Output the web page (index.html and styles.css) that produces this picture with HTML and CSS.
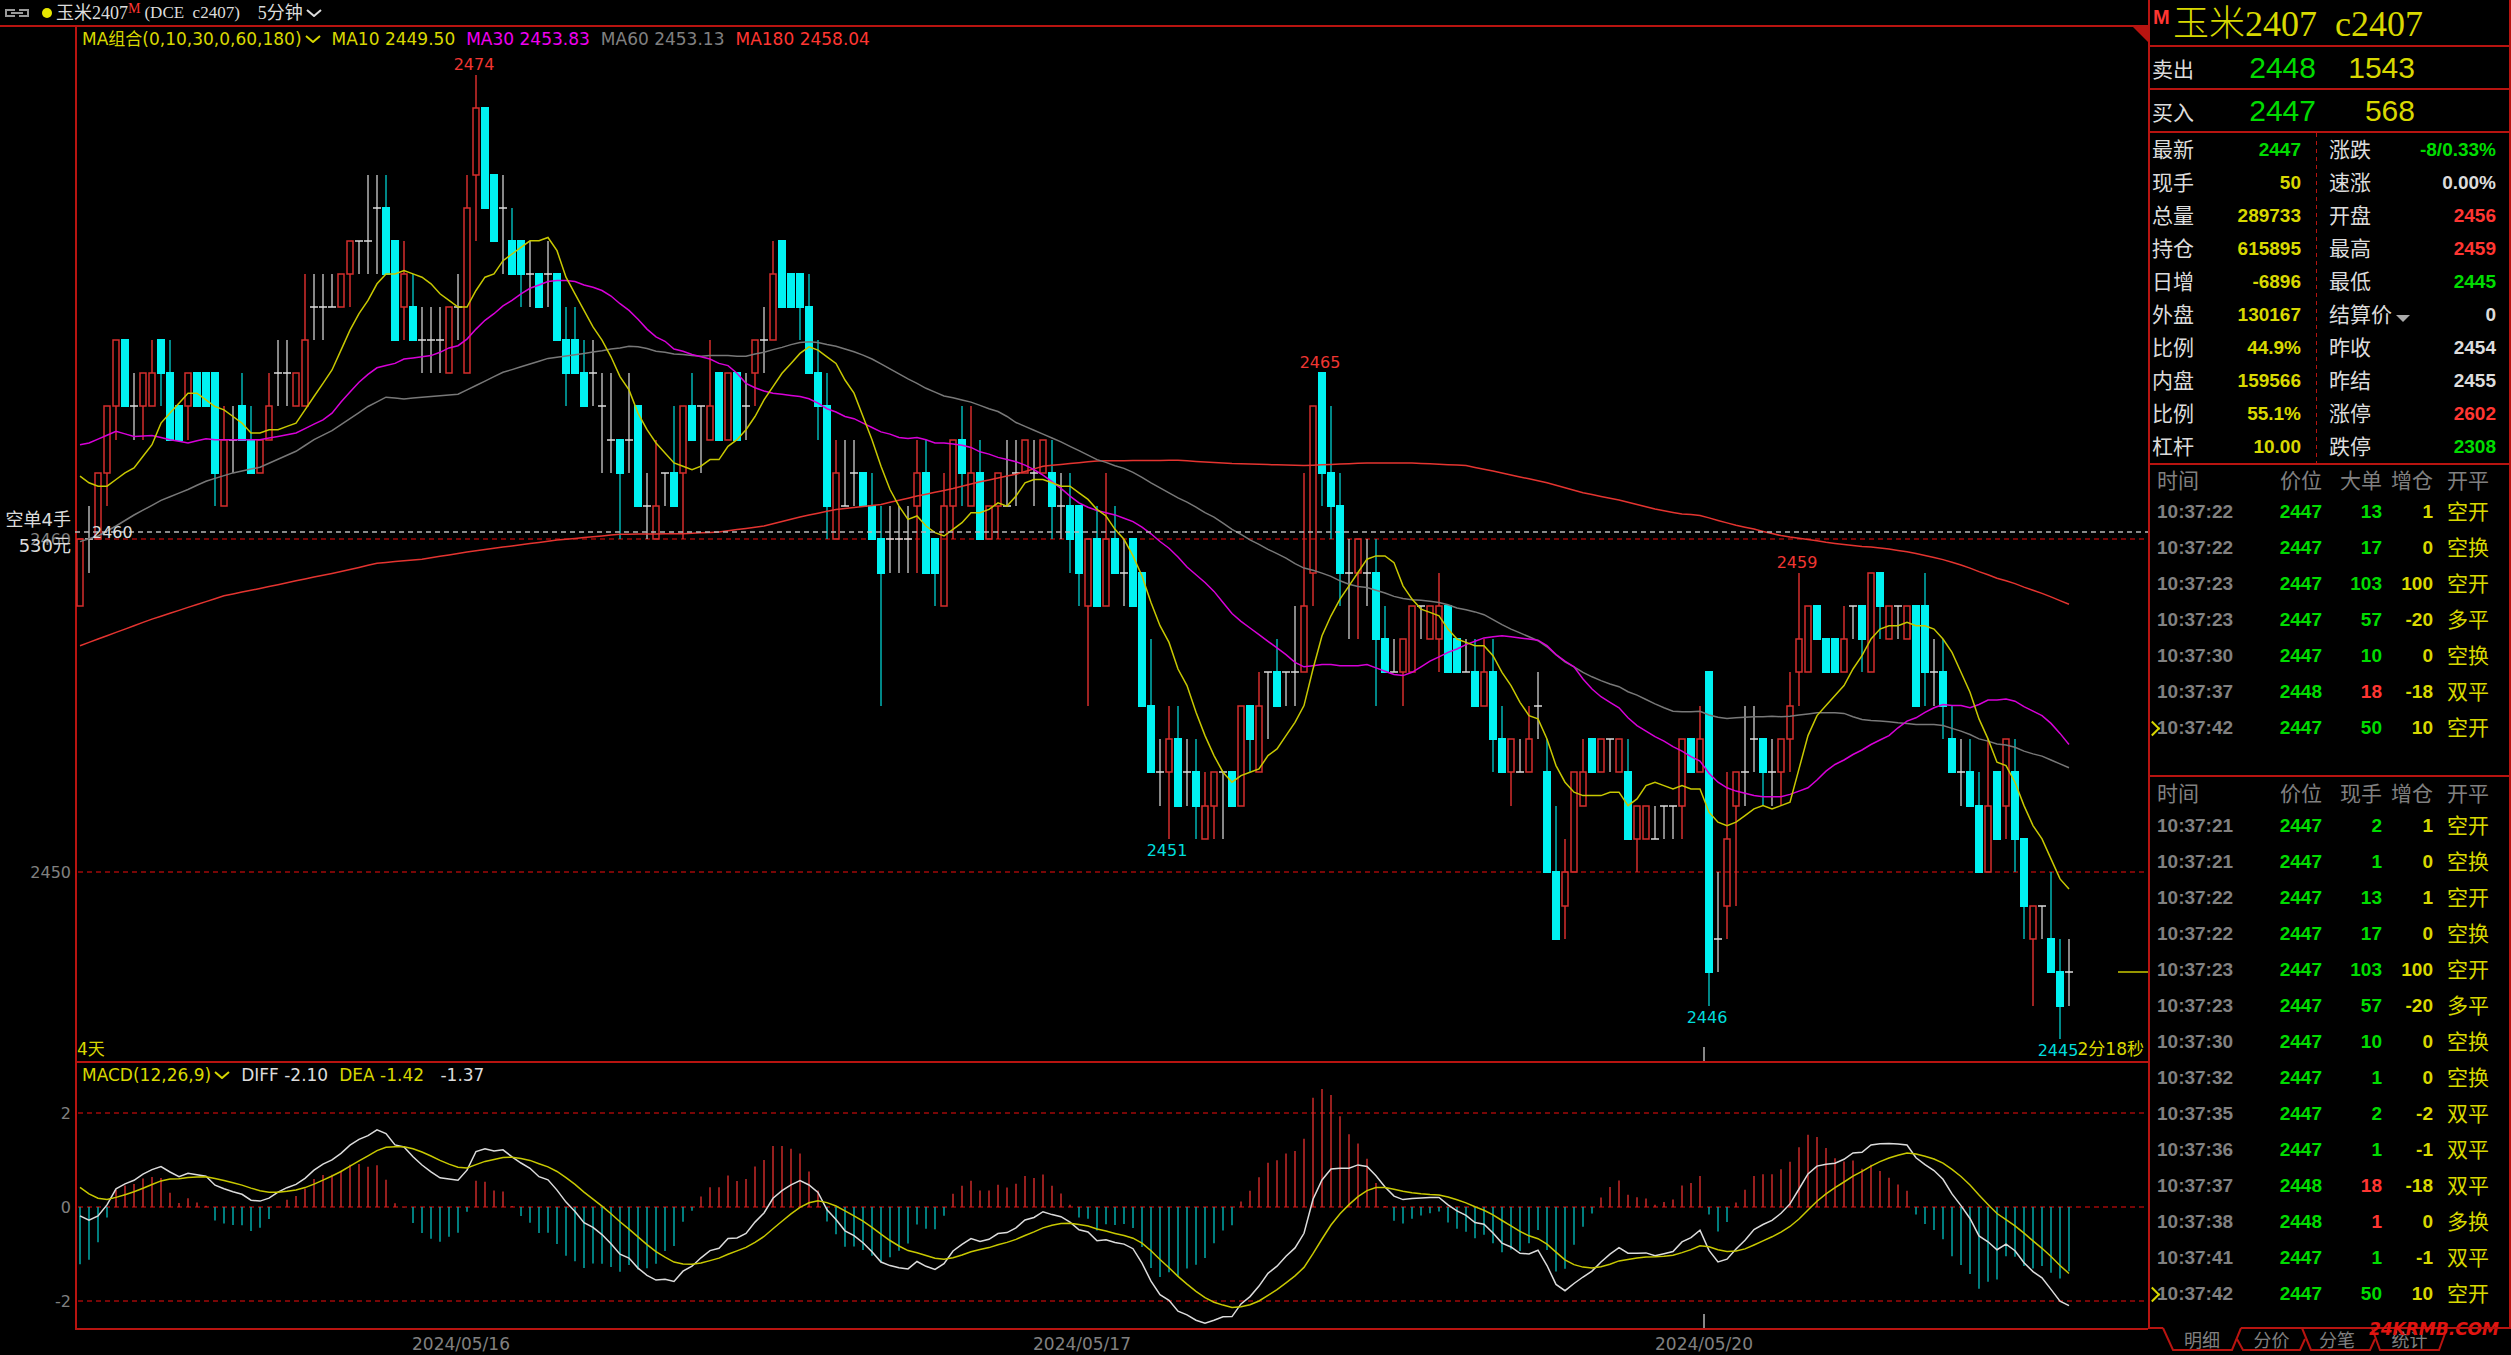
FILE: index.html
```html
<!DOCTYPE html>
<html lang="zh-CN">
<head>
<meta charset="utf-8">
<title>玉米2407 5分钟</title>
<link rel="stylesheet" href="styles.css">
</head>
<body>
<div class="app">
  <main class="chart">
    <header class="topbar">
      <svg class="link-icon" viewBox="0 0 24 8" aria-hidden="true"><path d="M10 1H1v6h9M14 1h9v6h-9M6 4h12"/></svg>
      <span class="dot"></span>
      <h1 class="symbol">玉米2407<sup>M</sup><span class="code">(DCE&nbsp; c2407)</span></h1>
      <button class="period" type="button">5分钟<svg class="chevron" viewBox="0 0 16 8" aria-hidden="true"><path d="M1 1l7 6 7-6"/></svg></button>
    </header>
    <section class="pane price-pane">
      <div class="axis price-axis"></div>
      <div class="plot" id="price-plot">
        <div class="legend">
          <button class="yellow" type="button">MA组合(0,10,30,0,60,180)<svg class="chevron" viewBox="0 0 16 8" aria-hidden="true"><path d="M1 1l7 6 7-6"/></svg></button>
          <span class="yellow">MA10 2449.50</span>
          <span class="magenta">MA30 2453.83</span>
          <span class="gray">MA60 2453.13</span>
          <span class="red">MA180 2458.04</span>
        </div>
        <svg class="canvas" id="price"></svg>
        <svg class="corner" viewBox="0 0 15 15" aria-hidden="true"><path d="M0 0h15v15z"/></svg>
        <span class="days">4天</span>
        <span class="countdown">2分18秒</span>
      </div>
    </section>
    <section class="pane macd-pane">
      <div class="axis"></div>
      <div class="plot" id="macd-plot">
        <div class="legend">
          <button class="yellow" type="button">MACD(12,26,9)<svg class="chevron" viewBox="0 0 16 8" aria-hidden="true"><path d="M1 1l7 6 7-6"/></svg></button>
          <span class="white">DIFF -2.10</span>
          <span class="yellow">DEA -1.42</span>
          <span class="white">&nbsp;-1.37</span>
        </div>
        <svg class="canvas" id="macd"></svg>
      </div>
    </section>
    <footer class="dates"><svg class="canvas" id="dates"></svg></footer>
  </main>
  <aside class="quote">
    <h2 class="title"><sup>M</sup>玉米2407&nbsp; c2407</h2>
    <div class="book"><span>卖出</span><b class="green">2448</b><b class="yellow">1543</b></div>
    <div class="book"><span>买入</span><b class="green">2447</b><b class="yellow">568</b></div>
    <div class="stats">
      <dl>
        <div><dt>最新</dt><dd class="green">2447</dd></div>
        <div><dt>现手</dt><dd class="yellow">50</dd></div>
        <div><dt>总量</dt><dd class="yellow">289733</dd></div>
        <div><dt>持仓</dt><dd class="yellow">615895</dd></div>
        <div><dt>日增</dt><dd class="yellow">-6896</dd></div>
        <div><dt>外盘</dt><dd class="yellow">130167</dd></div>
        <div><dt>比例</dt><dd class="yellow">44.9%</dd></div>
        <div><dt>内盘</dt><dd class="yellow">159566</dd></div>
        <div><dt>比例</dt><dd class="yellow">55.1%</dd></div>
        <div><dt>杠杆</dt><dd class="yellow">10.00</dd></div>
      </dl>
      <dl>
        <div><dt>涨跌</dt><dd class="green">-8/0.33%</dd></div>
        <div><dt>速涨</dt><dd class="white">0.00%</dd></div>
        <div><dt>开盘</dt><dd class="red">2456</dd></div>
        <div><dt>最高</dt><dd class="red">2459</dd></div>
        <div><dt>最低</dt><dd class="green">2445</dd></div>
        <div><dt>结算价<i class="caret"></i></dt><dd class="white">0</dd></div>
        <div><dt>昨收</dt><dd class="white">2454</dd></div>
        <div><dt>昨结</dt><dd class="white">2455</dd></div>
        <div><dt>涨停</dt><dd class="red">2602</dd></div>
        <div><dt>跌停</dt><dd class="green">2308</dd></div>
      </dl>
    </div>
    <div class="ticks big">
      <table>
        <thead><tr><th>时间</th><th>价位</th><th>大单</th><th>增仓</th><th>开平</th></tr></thead>
        <tbody>
          <tr><td>10:37:22</td><td>2447</td><td>13</td><td>1</td><td>空开</td></tr>
          <tr><td>10:37:22</td><td>2447</td><td>17</td><td>0</td><td>空换</td></tr>
          <tr><td>10:37:23</td><td>2447</td><td>103</td><td>100</td><td>空开</td></tr>
          <tr><td>10:37:23</td><td>2447</td><td>57</td><td>-20</td><td>多平</td></tr>
          <tr><td>10:37:30</td><td>2447</td><td>10</td><td>0</td><td>空换</td></tr>
          <tr><td>10:37:37</td><td>2448</td><td class="up">18</td><td>-18</td><td>双平</td></tr>
          <tr class="now"><td>10:37:42</td><td>2447</td><td>50</td><td>10</td><td>空开</td></tr>
        </tbody>
      </table>
    </div>
    <div class="ticks all">
      <table>
        <thead><tr><th>时间</th><th>价位</th><th>现手</th><th>增仓</th><th>开平</th></tr></thead>
        <tbody>
          <tr><td>10:37:21</td><td>2447</td><td>2</td><td>1</td><td>空开</td></tr>
          <tr><td>10:37:21</td><td>2447</td><td>1</td><td>0</td><td>空换</td></tr>
          <tr><td>10:37:22</td><td>2447</td><td>13</td><td>1</td><td>空开</td></tr>
          <tr><td>10:37:22</td><td>2447</td><td>17</td><td>0</td><td>空换</td></tr>
          <tr><td>10:37:23</td><td>2447</td><td>103</td><td>100</td><td>空开</td></tr>
          <tr><td>10:37:23</td><td>2447</td><td>57</td><td>-20</td><td>多平</td></tr>
          <tr><td>10:37:30</td><td>2447</td><td>10</td><td>0</td><td>空换</td></tr>
          <tr><td>10:37:32</td><td>2447</td><td>1</td><td>0</td><td>空换</td></tr>
          <tr><td>10:37:35</td><td>2447</td><td>2</td><td>-2</td><td>双平</td></tr>
          <tr><td>10:37:36</td><td>2447</td><td>1</td><td>-1</td><td>双平</td></tr>
          <tr><td>10:37:37</td><td>2448</td><td class="up">18</td><td>-18</td><td>双平</td></tr>
          <tr><td>10:37:38</td><td>2448</td><td class="up">1</td><td>0</td><td>多换</td></tr>
          <tr><td>10:37:41</td><td>2447</td><td>1</td><td>-1</td><td>双平</td></tr>
          <tr class="now"><td>10:37:42</td><td>2447</td><td>50</td><td>10</td><td>空开</td></tr>
        </tbody>
      </table>
    </div>
    <nav class="tabs">
      <button type="button"><svg viewBox="0 0 78 24" aria-hidden="true"><path d="M0 1l10 22h59l9-22"/></svg>明细</button>
      <button type="button"><svg viewBox="0 0 61 24" aria-hidden="true"><path d="M0 1h61M-4 12l6 11h57l5-11"/></svg>分价</button>
      <button type="button"><svg viewBox="0 0 70 24" aria-hidden="true"><path d="M0 1h70M0 1l9 22h59l5-11"/></svg>分笔</button>
      <button type="button"><svg viewBox="0 0 75 24" aria-hidden="true"><path d="M0 1h75M0 1l8 22h59l8-22"/></svg>统计</button>
      <span class="brand">24KRMB.COM</span>
    </nav>
  </aside>
</div>
<script src="chart.js"></script>
</body>
</html>
```
FILE: styles.css
```css
* { box-sizing: border-box; }
:root {
  --line: #b81410;
  --yellow: #d8d800;
  --green: #00dc00;
  --red: #ff3632;
  --white: #dcdcdc;
  --gray: #808080;
  --hei: "Liberation Sans", "Noto Sans CJK SC", sans-serif;
  --song: "Liberation Serif", "Noto Sans CJK SC", serif;
}
html, body { height: 100%; }
body { margin: 0; background: #000; color: var(--white); font-family: "DejaVu Sans", "Noto Sans CJK SC", sans-serif; font-size: 16px; }
h1, h2, dl, dd { margin: 0; font-weight: 400; }
button { background: none; border: 0; padding: 0; margin: 0; font: inherit; color: inherit; }
.app { display: grid; grid-template-columns: minmax(0, 1fr) 363px; min-height: 100vh; }
.yellow { color: var(--yellow); }
.green { color: var(--green); }
.red { color: var(--red); }
.white { color: var(--white); }
.gray { color: var(--gray); }
.magenta { color: #f000f0; }

.chart { display: grid; grid-template-rows: 25px minmax(0, 1036fr) minmax(0, 269fr) 25px; min-width: 0; }
.topbar { display: flex; align-items: center; padding-left: 5px; font: 18px/24px var(--song); }
.link-icon { width: 24px; height: 8px; fill: none; stroke: #9a9a9a; stroke-width: 2; }
.dot { width: 10px; height: 10px; margin: 0 4px 0 13px; border-radius: 50%; background: #e6e600; }
.symbol { display: flex; font-size: 18px; line-height: 24px; }
.symbol sup { font-size: 14px; line-height: 16px; color: var(--red); }
.code { margin-left: 4px; font-size: 17px; }
.period { display: flex; align-items: center; margin-left: 18px; }
.chevron { width: 16px; height: 8px; margin-left: 3px; fill: none; stroke: currentColor; stroke-width: 2; }

.pane { display: grid; grid-template-columns: 75px minmax(0, 1fr); min-height: 0; }
.plot { position: relative; border: 2px solid var(--line); border-width: 2px 0 0 2px; min-height: 0; }
.price-pane .axis { border-top: 2px solid var(--line); }
.macd-pane .plot { border-bottom-width: 2px; }
.canvas { position: absolute; left: -77px; top: 0; width: calc(100% + 77px); height: 100%; overflow: visible; }
.legend { position: relative; z-index: 1; display: flex; gap: 11px; padding-left: 5px; font-size: 17px; line-height: 24px; }
.legend button { display: flex; align-items: center; }
.corner { position: absolute; right: 0; top: 0; width: 15px; height: 15px; fill: var(--line); }
.days { position: absolute; left: 0; bottom: 2px; font-size: 17px; line-height: 20px; color: var(--yellow); }
.countdown { position: absolute; right: 4px; bottom: 2px; font-size: 17px; line-height: 20px; color: var(--yellow); }
.dates { position: relative; }
.dates .canvas { left: 0; width: 100%; }
svg text { font-size: 16px; }
svg .note { font-size: 18px; }
#dates text { font-size: 17px; }

.quote { display: flex; flex-direction: column; border: 2px solid var(--line); border-width: 0 2px 0 2px; font-family: var(--hei); }
.title { display: flex; height: 45px; padding-left: 3px; font: 300 36px/48px var(--song); color: var(--yellow); white-space: nowrap; }
.title sup { width: 20px; font: bold 20px/34px "Liberation Sans", sans-serif; color: var(--red); }
.book { display: grid; grid-template-columns: 64px 100px 99px; align-items: center; height: 43px; padding-left: 2px; border-top: 2px solid var(--line); }
.book span { font-size: 21px; }
.book b { font: 30px/40px "Liberation Sans", sans-serif; text-align: right; }
.stats { display: grid; grid-template-columns: 166px 1fr; height: 334px; border-top: 2px solid var(--line); border-bottom: 2px solid var(--line); }
.stats dl { display: grid; grid-template-rows: repeat(10, 33px); padding: 0 15px 0 2px; }
.stats dl + dl { padding: 0 13px; background: repeating-linear-gradient(var(--line) 0 4px, transparent 4px 8px) left top / 1px 100% no-repeat; }
.stats dl div { display: flex; justify-content: space-between; align-items: center; }
.stats dt { font-size: 21px; line-height: 32px; }
.stats dd { font: bold 19px/32px "Liberation Sans", sans-serif; }
.caret { display: inline-block; margin-left: 4px; border: 7px solid transparent; border-top-color: #aaa; border-bottom: 0; }
.ticks table { width: 100%; border-collapse: collapse; table-layout: fixed; font: bold 19px/36px "Liberation Sans", "Noto Sans CJK SC", sans-serif; }
.ticks th, .ticks td { padding: 0; height: 36px; text-align: right; white-space: nowrap; }
.ticks th { height: 31px; padding-top: 3px; font-size: 21px; line-height: 28px; font-weight: 400; color: var(--gray); }
.big th { height: 29px; line-height: 26px; }
.ticks th:first-child, .ticks td:first-child { width: 92px; padding-left: 7px; text-align: left; }
.ticks th:nth-child(2), .ticks td:nth-child(2) { width: 80px; }
.ticks th:nth-child(3), .ticks td:nth-child(3) { width: 60px; }
.ticks th:nth-child(4), .ticks td:nth-child(4) { width: 51px; }
.ticks th:last-child, .ticks td:last-child { padding-left: 14px; text-align: left; }
.ticks td:first-child { color: var(--gray); }
.ticks td:nth-child(2), .ticks td:nth-child(3) { color: var(--green); }
.ticks td.up:nth-child(3) { color: var(--red); }
.ticks td:nth-child(4), .ticks td:last-child { color: var(--yellow); }
.ticks td:last-child { font-size: 21px; font-weight: 400; }
.now td:first-child { position: relative; }
.now td:first-child::before { content: ""; position: absolute; left: -3px; top: 13px; width: 9px; height: 9px; border: 2px solid var(--yellow); border-width: 2px 2px 0 0; transform: rotate(45deg); }
.big { height: 312px; border-bottom: 2px solid var(--line); }
.all { flex: 1; }
.tabs { position: relative; display: flex; height: 28px; margin: 0 -2px; padding-left: 15px; background: #000; color: var(--gray); font-size: 18px; }
.tabs::before { content: ""; position: absolute; left: 0; top: 0; width: 15px; border-top: 2px solid var(--line); }
.tabs::after { content: ""; position: absolute; right: 0; top: 0; left: 299px; border-top: 2px solid var(--line); }
.tabs button { position: relative; width: 70px; line-height: 24px; }
.tabs button:first-child { width: 78px; }
.tabs button:nth-child(2) { width: 61px; }
.tabs button:nth-child(4) { width: 75px; }
.tabs svg { position: absolute; left: 0; top: 0; width: 100%; height: 24px; overflow: visible; fill: none; stroke: var(--line); stroke-width: 2; }
.brand { position: absolute; right: 12px; top: -8px; font: italic bold 17px/20px "DejaVu Sans", sans-serif; color: #e01410; }
```
FILE: chart.js
```js
// Five-minute bars, offsets from 2400: open, high, low, close.
const BARS = `
58 60 58 60,60 61 59 60,60 62 60 62,62 64 61 64,64 66 63 66,66 66 64 64,64 65 63 64,64 65 63 65,64 66 64 65,66 66 64 65,
65 66 63 63,64 64 63 63,64 65 63 65,65 65 64 64,65 65 64 64,65 65 61 62,61 64 61 63,63 64 62 63,64 65 63 63,63 64 62 62,
62 63 62 63,63 65 63 64,65 66 64 65,65 66 64 65,64 65 64 65,64 68 64 66,67 68 66 67,67 68 66 67,67 68 67 67,67 68 67 68,
68 69 67 69,69 69 68 69,69 71 68 69,70 71 68 70,70 71 68 68,69 69 66 66,67 69 66 68,67 68 66 66,66 67 65 66,66 67 65 66,
66 67 65 66,65 67 65 67,67 68 66 67,65 71 65 70,71 74 69 73,73 73 70 70,71 71 69 69,70 71 68 70,69 70 68 68,69 69 67 68,
68 69 67 68,68 68 67 67,68 69 67 68,68 68 66 66,66 67 64 65,66 67 65 65,65 66 64 64,65 66 64 65,64 65 62 64,63 65 62 63,
63 63 60 62,63 65 62 63,64 64 61 61,61 62 60 61,60 63 60 61,62 62 61 62,62 64 61 61,62 64 60 64,64 65 63 63,64 64 62 64,
63 66 63 64,65 65 63 63,63 65 63 65,65 65 63 63,64 65 63 64,65 66 64 66,66 67 65 66,66 69 66 68,69 69 67 67,68 68 67 67,
68 68 66 67,67 68 65 65,65 66 63 64,64 65 60 61,60 63 60 62,61 63 61 61,62 63 61 62,62 62 61 61,61 62 60 60,60 61 55 59,
60 61 59 60,60 61 59 60,60 61 59 60,61 63 59 62,62 63 59 59,60 60 58 59,58 62 58 61,61 63 60 63,63 64 61 62,61 64 61 62,
62 63 60 60,60 61 60 61,61 62 60 62,61 63 61 61,62 63 61 62,62 63 62 63,62 63 61 62,62 63 62 63,62 63 60 61,61 62 60 61,
61 62 59 60,61 61 58 59,58 60 55 60,60 61 58 58,58 62 58 60,60 61 59 59,59 60 58 59,60 60 58 58,59 59 55 55,55 57 53 53,
53 54 52 53,53 55 51 54,54 55 52 52,53 54 52 53,53 54 51 52,51 53 51 52,52 53 51 53,53 53 51 53,53 53 52 52,52 55 52 55,
55 55 53 54,53 56 53 55,56 56 54 56,56 57 55 55,56 56 55 56,56 58 55 56,56 62 56 58,59 64 58 64,65 65 61 62,62 64 60 61,
61 62 58 59,59 60 57 59,59 60 57 60,59 60 58 59,59 60 55 57,57 58 56 56,56 57 56 56,56 57 55 57,56 58 56 58,58 58 57 58,
57 58 57 58,57 59 56 58,58 58 56 56,57 57 56 56,56 57 56 56,56 57 55 55,55 57 55 56,56 57 53 54,54 55 53 53,53 54 52 54,
53 54 53 53,53 55 53 54,55 56 54 55,53 54 50 50,50 52 48 48,49 51 48 50,50 53 50 53,52 54 52 53,54 54 53 53,53 54 53 54,
54 54 53 54,53 54 53 54,53 54 51 51,51 52 50 52,51 52 51 52,51 52 51 51,52 52 51 52,52 52 51 52,52 54 51 54,54 54 53 53,
53 55 53 54,56 56 46 47,48 50 47 48,49 53 48 51,52 53 49 53,53 55 52 53,54 55 53 54,54 54 52 53,53 54 52 53,53 54 52 54,
54 56 53 55,56 59 55 57,56 58 56 58,58 58 57 57,57 57 56 56,57 57 56 56,56 58 56 57,58 58 57 58,58 58 56 57,56 59 56 59,
59 59 57 58,57 58 57 58,58 58 57 58,57 58 57 58,58 58 55 55,58 59 55 56,56 57 55 56,56 57 54 55,54 55 53 53,53 54 52 53,
53 54 52 52,52 53 50 50,50 54 50 52,53 53 51 51,52 54 51 54,53 54 50 51,51 51 48 49,48 49 46 49,49 49 48 49,48 50 47 47,
47 48 45 46,47 48 46 47`.trim().split(/,\s*/).map(b => b.split(' ').map(Number));

// Averages carried in from before the first bar: [bar index, value] knots.
const SEEDS = {
  10: [[0,61.9],[1,61.7],[2,61.6],[3,61.6],[4,61.8],[5,62],[6,62.15],[7,62.5],[8,62.85]],
  30: [[0,62.85],[1,62.9],[4,63.25],[6,63.1],[8,63.13],[10,63],[12,62.9],[14,63.03],[15,63],[20,63],[22,63.1],[24,63.2],[27,63.6],[28,63.8]],
  60: [[0,59.93],[2,60.1],[4,60.4],[6,60.73],[9,61.17],[12,61.5],[14,61.75],[17,62],[20,62.17],[24,62.65],[26,63],[28,63.27],[32,64],[34,64.28],[36,64.23],[42,64.37],[43,64.5],[47,65.03],[52,65.45],[56,65.6],[58,65.68]],
  180: [[0,56.8],[8,57.6],[12,57.95],[16,58.3],[20,58.52],[24,58.75],[29,59.03],[33,59.28],[38,59.4],[43,59.62],[48,59.8],[53,59.98],[60,60.15],[67,60.17],[71,60.22],[76,60.4],[80,60.67],[84,60.9],[89,61.05],[93,61.3],[97,61.53],[100,61.73],[104,61.96],[107,62.2],[113,62.36],[122,62.38],[128,62.28],[136,62.22],[143,62.3],[148,62.3],[154,62.22],[158,62],[163,61.7],[167,61.4],[171,61.18],[175,60.91],[178,60.76]]
};

const close = BARS.map(b => b[3]);
const PITCH = 9, FIRST = 80;
const bx = i => FIRST + PITCH * i;

function average(n) {
  const seed = SEEDS[n];
  return close.map((_, i) => {
    if (i >= n - 1) return close.slice(i - n + 1, i + 1).reduce((a, b) => a + b) / n;
    const k = Math.max(1, seed.findIndex(s => s[0] >= i));
    const [x0, v0] = seed[k - 1], [x1, v1] = seed[k];
    return v0 + (v1 - v0) * (i - x0) / (x1 - x0);
  });
}

const line = (x1, y1, x2, y2, c, extra = '') =>
  `<path d="M${x1} ${y1}L${x2} ${y2}" stroke="${c}" ${extra}/>`;
const curve = (vals, y, c) =>
  `<polyline points="${vals.map((v, i) => bx(i) + ',' + y(v).toFixed(1)).join(' ')}" fill="none" stroke="${c}" stroke-width="1.5"/>`;
const text = (x, y, s, c, anchor = 'middle', cls = '') =>
  `<text x="${x}" y="${y}" fill="${c}" text-anchor="${anchor}" class="${cls}">${s}</text>`;

function drawPrice() {
  const svg = document.getElementById('price');
  const W = svg.clientWidth, H = svg.clientHeight;
  const k = H / 1034;
  const y = v => (512.3 - 81740 * Math.log((2400 + v) / 2460)) * k;
  const r = v => Math.round(y(v));
  let s = '';
  for (const v of [60, 50]) s += line(78, r(v), W, r(v), '#a00808', 'stroke-width="1.5" stroke-dasharray="5 4"');
  BARS.forEach(([o, h, l, c], i) => {
    const x = bx(i);
    if (o === c) {
      s += line(x, r(h), x, r(l), '#b4b4b4', 'stroke-width="1.5"') + line(x - 4, r(o), x + 4, r(o), '#dcdcdc', 'stroke-width="1.5"');
    } else if (c < o) {
      s += line(x, r(h), x, r(l), '#00b4b4', 'stroke-width="1.5"');
      s += `<rect x="${x - 4}" y="${r(o) - 1}" width="8" height="${r(c) - r(o) + 2}" fill="#00f2f2"/>`;
    } else {
      s += line(x, r(h), x, r(c), '#d42e2c', 'stroke-width="1.5"') + line(x, r(o), x, r(l), '#d42e2c', 'stroke-width="1.5"');
      s += `<rect x="${x - 3}" y="${r(c)}" width="6" height="${r(o) - r(c)}" fill="none" stroke="#d42e2c" stroke-width="1.5"/>`;
    }
  });
  s += curve(average(180), y, '#e43430') + curve(average(60), y, '#787878') + curve(average(30), y, '#d800d8') + curve(average(10), y, '#c8c800');
  const order = Math.round(505 * k);
  s += line(75, order, W, order, '#b8b8b8', 'stroke-width="1.5" stroke-dasharray="5 4"');
  s += text(92, order + 6, 2460, '#dcdcdc', 'start');
  s += text(71, r(60) + 6, 2460, '#808080', 'end') + text(71, r(50) + 6, 2450, '#808080', 'end');
  s += text(71, order - 6, '空单4手', '#dcdcdc', 'end', 'note') + text(71, order + 20, '530元', '#dcdcdc', 'end', 'note');
  for (const [i, v, up] of [[44, 74, 1], [138, 65, 1], [191, 59, 1], [121, 51, 0], [181, 46, 0], [220, 45, 0]])
    s += text(bx(i) - 2, up ? y(v) - 5 : y(v) + 17, 2400 + v, up ? '#f03632' : '#00dcdc');
  s += line(W - 30, r(47), W, r(47), '#c8c800', 'stroke-width="1.5"');
  s += line(1704, H - 14, 1704, H, '#b4b4b4', 'stroke-width="1.5"');
  svg.innerHTML = s;
}

function drawMacd() {
  const svg = document.getElementById('macd');
  const W = svg.clientWidth, H = svg.clientHeight;
  const unit = 47 * H / 265, zero = 144 * H / 265;
  const y = v => zero - v * unit;
  let fast = 61.31, slow = 61.5, dea = 0.42;
  const diffs = [], deas = [];
  close.forEach((c, i) => {
    if (i) {
      fast += (c - fast) * 2 / 13;
      slow += (c - slow) * 2 / 27;
      dea += (fast - slow - dea) / 5;
    }
    diffs.push(fast - slow);
    deas.push(dea);
  });
  let s = '';
  for (const v of [2, 0, -2]) {
    s += line(78, Math.round(y(v)), W, Math.round(y(v)), '#a00808', 'stroke-width="1.5" stroke-dasharray="5 4"');
    s += text(71, Math.round(y(v)) + 6, v, '#808080', 'end');
  }
  diffs.forEach((d, i) => {
    const v = 2 * (d - deas[i]);
    s += line(bx(i), zero, bx(i), y(v), v > 0 ? '#c82a28' : '#00a8a8', 'stroke-width="1.5"');
  });
  s += curve(diffs, y, '#dcdcdc') + curve(deas, y, '#c8c800');
  s += line(1704, H - 14, 1704, H, '#b4b4b4', 'stroke-width="1.5"');
  svg.innerHTML = s;
}

function draw() {
  drawPrice();
  drawMacd();
  document.getElementById('dates').innerHTML =
    [[461, '2024/05/16'], [1082, '2024/05/17'], [1704, '2024/05/20']].map(([x, d]) => text(x, 20, d, '#808080')).join('');
}
draw();
addEventListener('resize', draw);
```
